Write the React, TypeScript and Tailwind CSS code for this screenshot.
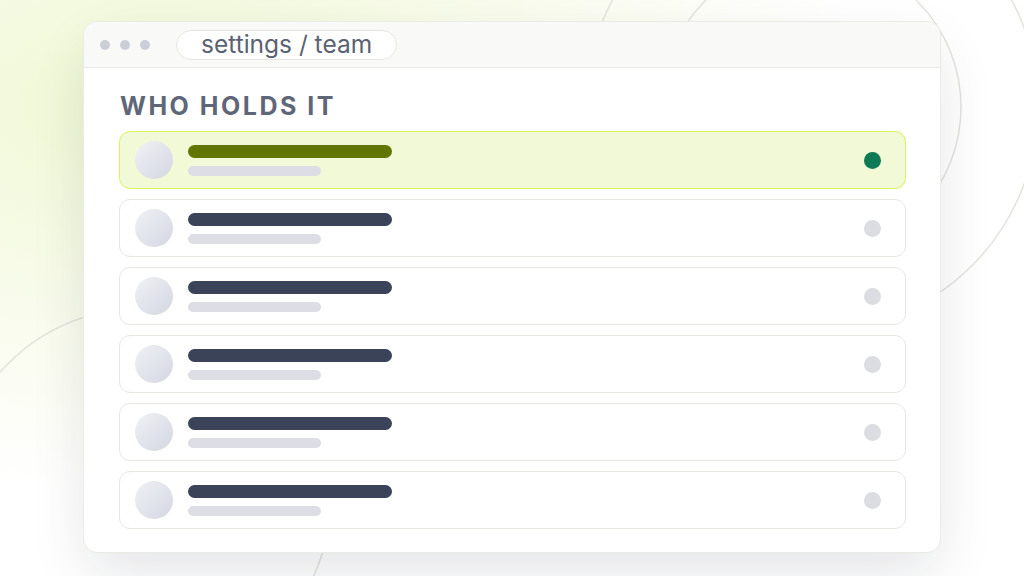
import React from 'react'

const rows = [true, false, false, false, false, false]

function Row({ active }: { active: boolean }) {
  return (
    <div
      className={
        active
          ? 'flex h-[58px] items-center rounded-[11px] border-[1.5px] border-[#d8f25a] bg-[#f2f9d6] pl-[15px] pr-[24px]'
          : 'flex h-[58px] items-center rounded-[11px] border-[1.5px] border-[#e7e7e2] bg-white pl-[15px] pr-[24px]'
      }
    >
      <div className="h-[38px] w-[38px] shrink-0 rounded-full bg-linear-to-br from-[#f0f1f5] to-[#d3d7e1]" />
      <div className="ml-[15px] flex flex-col gap-[8px]">
        <div className={active ? 'h-[13px] w-[204px] rounded-full bg-[#617600]' : 'h-[13px] w-[204px] rounded-full bg-[#3b4358]'} />
        <div className="h-[10px] w-[133px] rounded-full bg-[#dddee5]" />
      </div>
      <div className={active ? 'ml-auto h-[17px] w-[17px] rounded-full bg-[#0b7a55]' : 'ml-auto h-[17px] w-[17px] rounded-full bg-[#dcdde3]'} />
    </div>
  )
}

export default function App() {
  return (
    <div className="relative h-[576px] w-full overflow-hidden bg-white bg-[radial-gradient(ellipse_at_14%_18%,#eff8d4_0%,rgba(245,250,226,0.75)_28%,rgba(255,255,255,0)_58%)] font-['Inter',sans-serif]">
      <svg className="absolute inset-0" width="1024" height="576" viewBox="0 0 1024 576" fill="none">
        <circle cx="811" cy="107" r="150" stroke="#e3e3dd" strokeWidth="1.5" />
        <circle cx="812" cy="106" r="226" stroke="#e3e3dd" strokeWidth="1.5" />
        <circle cx="142" cy="497" r="189" stroke="#e3e3dd" strokeWidth="1.5" />
      </svg>

      <div className="relative pl-[83px] pt-[21px]">
        <div className="w-[858px] overflow-hidden rounded-[14px] border border-[#ebebe6] bg-white shadow-[0_24px_60px_-6px_rgba(20,24,40,0.12)]">
          <div className="flex h-[46px] items-center border-b border-[#ebebe6] bg-[#f9f9f7] pl-[16px]">
            <div className="flex gap-[10px]">
              <span className="h-[10px] w-[10px] rounded-full bg-[#cbced8]" />
              <span className="h-[10px] w-[10px] rounded-full bg-[#cbced8]" />
              <span className="h-[10px] w-[10px] rounded-full bg-[#cbced8]" />
            </div>
            <div className="ml-[26px] flex h-[30px] items-center rounded-full border border-[#e6e6e0] bg-white px-6 text-[24.5px] leading-none text-[#5b6272]">
              settings / team
            </div>
          </div>

          <div className="pl-[35px] pr-[34px] pt-[23px] pb-[23px]">
            <h1 className="mb-[10px] pl-[1px] text-[25px] leading-[30px] font-bold tracking-[0.1em] text-[#5f6678]">WHO HOLDS IT</h1>
            <div className="flex flex-col gap-[10px]">
              {rows.map((active, i) => (
                <Row key={i} active={active} />
              ))}
            </div>
          </div>
        </div>
      </div>
    </div>
  )
}
